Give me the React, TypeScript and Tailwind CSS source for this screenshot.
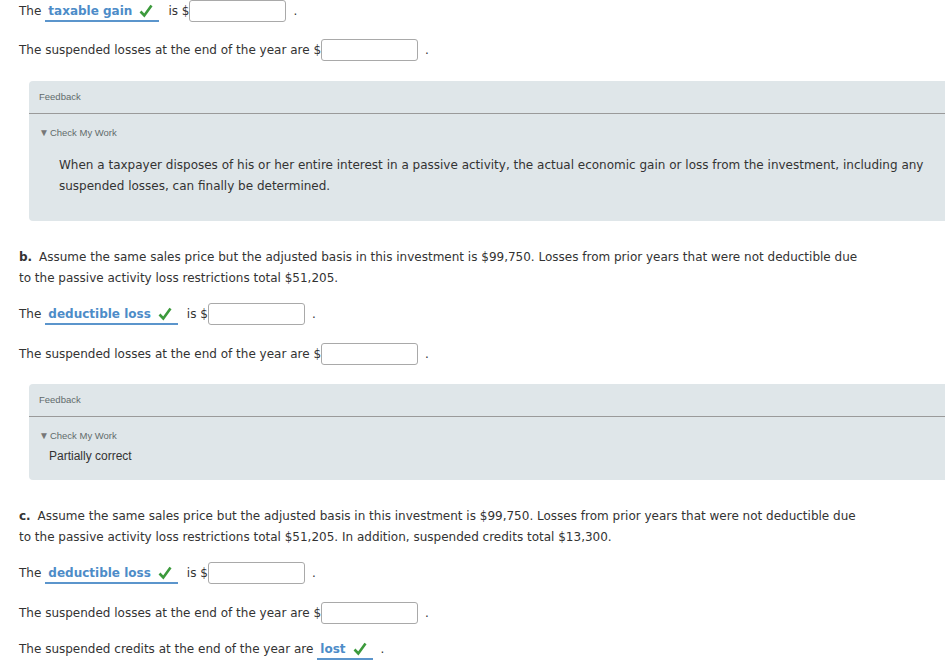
import React from 'react'

const font = { fontFamily: '"DejaVu Sans", Verdana, sans-serif' }
const arial = { fontFamily: '"Liberation Sans", Arial, sans-serif' }

const Check = () => (
  <svg width="14" height="14" viewBox="0 0 14 14" className="ml-[7px]">
    <path d="M1.5 7.5 L5.3 11.5 L12.5 1.5" fill="none" stroke="#3c9a3c" strokeWidth="2.6" strokeLinejoin="miter" />
  </svg>
)

const Answer = ({ text }: { text: string }) => (
  <span className="flex items-center h-[22px] border-b-2 border-[#5b95cc] pl-[3px] pr-[6px] pt-[1px]">
    <span className="font-bold text-[#4d8cc8]">{text}</span>
    <Check />
  </span>
)

const Input = () => (
  <span className="inline-block w-[97px] h-[22px] bg-white border border-[#a9a9a9] rounded-[3px]" />
)

const DropRow = ({ label, className = '' }: { label: string; className?: string }) => (
  <div className={'flex items-center h-[22px] ' + className}>
    <span>The</span>
    <span className="ml-[4px]">
      <Answer text={label} />
    </span>
    <span className="ml-[9px]">is $</span>
    <Input />
    <span className="ml-[7px]">.</span>
  </div>
)

const LossRow = ({ className = '' }: { className?: string }) => (
  <div className={'flex items-center h-[22px] ' + className}>
    <span>The suspended losses at the end of the year are $</span>
    <Input />
    <span className="ml-[7px]">.</span>
  </div>
)

const Feedback = ({ children, className = '' }: { children: React.ReactNode; className?: string }) => (
  <div className={'ml-[10px] mr-[-19px] bg-[#dfe6e9] rounded-l-[4px] ' + className}>
    <div className="pl-[10px] pt-[10px] h-[22px] text-[9.5px] leading-[12px] text-[#5f6b6b]" style={arial}>
      Feedback
    </div>
    <div className="mt-[10px] h-px bg-[#9a9a9a]" />
    <div className="pl-[10px] mt-[13px] h-[12px] flex items-center text-[9.5px] leading-[12px] text-[#5f6b6b]" style={arial}>
      <span className="text-[10px] text-[#777] mr-[1px]">▼</span>
      Check My Work
    </div>
    {children}
  </div>
)

export default function App() {
  return (
    <div className="bg-white min-h-screen w-[945px] overflow-hidden pl-[19px] text-[12px] text-[#333]" style={font}>
      <DropRow label="taxable gain" />
      <LossRow className="mt-[17px]" />

      <Feedback className="mt-[20px] pb-[24px]">
        <p className="pl-[30px] pr-[10px] mt-[16px] leading-[21px] text-[#333]">
          When a taxpayer disposes of his or her entire interest in a passive activity, the actual economic gain or loss from the investment, including any suspended losses, can finally be determined.
        </p>
      </Feedback>

      <p className="mt-[26px] leading-[21px] pr-[85px]">
        <b className="mr-[3px]">b.</b> Assume the same sales price but the adjusted basis in this investment is $99,750. Losses from prior years that were not deductible due to the passive activity loss restrictions total $51,205.
      </p>
      <DropRow label="deductible loss" className="mt-[14px]" />
      <LossRow className="mt-[18px]" />

      <Feedback className="mt-[19px] pb-[16px]">
        <p className="pl-[20px] mt-[6px] leading-[16px] text-[12px] text-[#333]" style={arial}>
          Partially correct
        </p>
      </Feedback>

      <p className="mt-[26px] leading-[21px] pr-[85px]">
        <b className="mr-[3px]">c.</b> Assume the same sales price but the adjusted basis in this investment is $99,750. Losses from prior years that were not deductible due to the passive activity loss restrictions total $51,205. In addition, suspended credits total $13,300.
      </p>
      <DropRow label="deductible loss" className="mt-[14px]" />
      <LossRow className="mt-[18px]" />
      <div className="flex items-center h-[22px] mt-[14px]">
        <span>The suspended credits at the end of the year are</span>
        <span className="ml-[4px]">
          <Answer text="lost" />
        </span>
        <span className="ml-[8px]">.</span>
      </div>
    </div>
  )
}
